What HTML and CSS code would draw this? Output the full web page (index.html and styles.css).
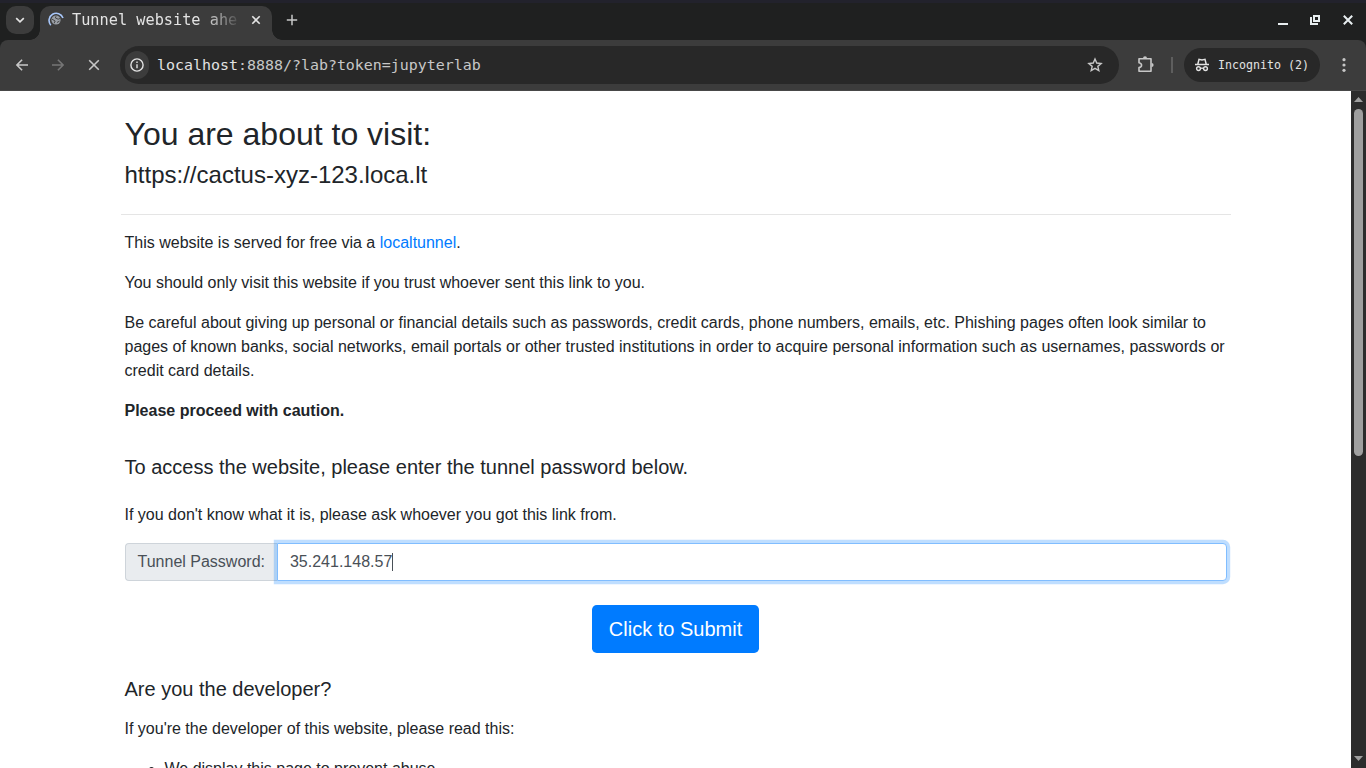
FILE: index.html
```html
<!DOCTYPE html>
<html lang="en">
<head>
<meta charset="utf-8">
<title>Tunnel website ahead!</title>
<link rel="stylesheet" href="styles.css">
</head>
<body>
<div class="window">
  <header class="titlebar">
    <button class="tab-search"><svg width="28" height="28" viewBox="0 0 28 28"><path d="M10.2 12.2 14 15.8l3.8-3.6" fill="none" stroke="#e3e3e3" stroke-width="1.7"/></svg></button>
    <div class="tab">
      <svg class="tab-icon" width="16" height="16" viewBox="0 0 16 16"><circle cx="8" cy="8" r="4.6" fill="#9a9fa6"/><path d="M4 7.2 7.2 9 6 11.4M8 4.2 7.4 6l2.8 1.2L12 6.5M9 10.5l2.5-1.4" fill="none" stroke="#3c3c3c" stroke-width=".9"/><path d="M2.8 13.2A7.2 7.2 0 1 1 15 6" fill="none" stroke="#a8c7fa" stroke-width="1.6"/></svg>
      <span class="tab-title">Tunnel website ahe</span>
      <svg class="tab-close" width="10" height="10" viewBox="0 0 10 10"><path d="m1.3 1.3 7.4 7.4m0-7.4L1.3 8.7" stroke="#e3e3e3" stroke-width="1.6"/></svg>
    </div>
    <svg class="new-tab" width="12" height="12" viewBox="0 0 12 12"><path d="M6 .8v10.4M.8 6h10.4" stroke="#c7c7c7" stroke-width="1.5"/></svg>
    <div class="controls">
      <svg width="10" height="12" viewBox="0 0 10 12"><path d="M0 10h10" stroke="#e8eef0" stroke-width="2"/></svg>
      <svg width="10" height="12" viewBox="0 0 10 12"><path d="M4 2h5v5H4zM1 3v7h7" fill="none" stroke="#e8eef0" stroke-width="2"/></svg>
      <svg width="10" height="12" viewBox="0 0 10 12"><path d="m.8 1.8 8.4 8.4m0-8.4L.8 10.2" stroke="#e8eef0" stroke-width="2"/></svg>
    </div>
  </header>
  <nav class="toolbar">
    <svg class="nav-icon" width="16" height="16" viewBox="0 0 16 16"><path d="M14 8H3M8.1 2.8 2.9 8l5.2 5.2" fill="none" stroke="#c7c7c7" stroke-width="1.6"/></svg>
    <svg class="nav-icon" width="16" height="16" viewBox="0 0 16 16"><path d="M2 8h11M7.9 2.8 13.1 8l-5.2 5.2" fill="none" stroke="#757575" stroke-width="1.6"/></svg>
    <svg class="nav-icon" width="16" height="16" viewBox="0 0 16 16"><path d="m3.2 3.2 9.6 9.6m0-9.6-9.6 9.6" stroke="#c7c7c7" stroke-width="1.6"/></svg>
    <div class="omnibox">
      <span class="site-info"><svg width="14" height="14" viewBox="0 0 14 14"><circle cx="7" cy="7" r="6.1" fill="none" stroke="#e3e3e3" stroke-width="1.4"/><path d="M7 6.2v4.1M7 3.6v1.5" stroke="#e3e3e3" stroke-width="1.4"/></svg></span>
      <span class="url"><b>localhost</b>:8888/?lab?token=jupyterlab</span>
      <svg class="star" width="16" height="16" viewBox="0 0 16 16"><path d="m8 2 1.75 4.05 4.4.4-3.32 2.92.98 4.3L8 11.4l-3.8 2.27.98-4.3L1.85 6.45l4.4-.4z" fill="none" stroke="#c7c7c7" stroke-width="1.4"/></svg>
    </div>
    <svg class="puzzle" width="18" height="18" viewBox="0 0 18 18"><path d="M2 2.8h12v12.4H2v-3.6c3.4-.7 3.4-4.2 0-4.9z" fill="none" stroke="#c7c7c7" stroke-width="1.6" stroke-linejoin="round"/><path d="M6 2.2a2 2 0 0 1 4 0zM14.6 7a2 2 0 0 1 0 4z" fill="#c7c7c7"/></svg>
    <span class="separator"></span>
    <div class="incognito">
      <svg width="16" height="16" viewBox="0 0 16 16"><path d="M1 7.6h14M3.8 7.2 5 2.3l3 .6 3-.6 1.2 4.9" fill="none" stroke="#e3e3e3" stroke-width="1.5"/><circle cx="4.5" cy="11.6" r="1.9" fill="none" stroke="#e3e3e3" stroke-width="1.4"/><circle cx="11.5" cy="11.6" r="1.9" fill="none" stroke="#e3e3e3" stroke-width="1.4"/><path d="M6.5 11.4q1.5-.7 3 0" fill="none" stroke="#e3e3e3" stroke-width="1.3"/></svg>
      <span>Incognito (2)</span>
    </div>
    <svg class="menu" width="4" height="16" viewBox="0 0 4 16"><g fill="#c7c7c7"><circle cx="2" cy="2.7" r="1.6"/><circle cx="2" cy="8" r="1.6"/><circle cx="2" cy="13.3" r="1.6"/></g></svg>
  </nav>
  <div class="viewport">
    <main class="page">
      <div class="container">
        <div class="inset">
          <h2>You are about to visit:</h2>
          <h4>https://cactus-xyz-123.loca.lt</h4>
        </div>
        <hr>
        <div class="inset">
          <p>This website is served for free via a <a href="#">localtunnel</a>.</p>
          <p>You should only visit this website if you trust whoever sent this link to you.</p>
          <p>Be careful about giving up personal or financial details such as passwords, credit cards, phone numbers, emails, etc. Phishing pages often look similar to pages of known banks, social networks, email portals or other trusted institutions in order to acquire personal information such as usernames, passwords or credit card details.</p>
          <p><strong>Please proceed with caution.</strong></p>
          <h5 class="access">To access the website, please enter the tunnel password below.</h5>
          <p>If you don't know what it is, please ask whoever you got this link from.</p>
          <div class="input-group">
            <span class="addon">Tunnel Password:</span>
            <div class="field"><span>35.241.148.57</span><i class="caret"></i></div>
          </div>
          <button class="submit">Click to Submit</button>
          <h5 class="developer">Are you the developer?</h5>
          <p>If you're the developer of this website, please read this:</p>
          <ul><li>We display this page to prevent abuse.</li></ul>
        </div>
      </div>
    </main>
    <aside class="scrollbar">
      <svg width="9" height="5" viewBox="0 0 9 5"><path d="M4.5 0 9 5H0z" fill="#9f9f9f"/></svg>
      <span class="thumb"></span>
      <svg width="9" height="5" viewBox="0 0 9 5"><path d="M0 0h9L4.5 5z" fill="#9f9f9f"/></svg>
    </aside>
  </div>
</div>
</body>
</html>
```
FILE: styles.css
```css
* { box-sizing: border-box; }
body { margin: 0; overflow: hidden; font: 16px/1.5 "Liberation Sans", Arial, sans-serif; color: #212529; }
button { font: inherit; border: 0; padding: 0; }
svg { display: block; flex: none; }
.window { height: 768px; display: flex; flex-direction: column; background: #1f2020; }

.titlebar { height: 40px; flex: none; display: flex; align-items: center; padding: 0 13px 0 6px; background: linear-gradient(#22222c 3px, #1f2020 3px); }
.tab-search { width: 28px; height: 28px; border-radius: 10px; background: #3c3c3c; }
.tab { position: relative; align-self: flex-end; width: 232px; height: 34px; margin-left: 6px; padding: 0 11px 6px 8px; display: flex; align-items: center; border-radius: 10px 10px 0 0; background: #3c3c3c; }
.tab::before, .tab::after { content: ""; position: absolute; bottom: 0; width: 10px; height: 10px; }
.tab::before { right: 100%; background: radial-gradient(circle at 0 0, transparent 9.5px, #3c3c3c 10px); }
.tab::after { left: 100%; background: radial-gradient(circle at 100% 0, transparent 9.5px, #3c3c3c 10px); }
.tab-title { width: 167px; margin-left: 8px; white-space: nowrap; font: 15.25px/20px "DejaVu Sans Mono", monospace; color: #e3e3e3; -webkit-mask-image: linear-gradient(90deg, #000 132px, transparent 170px); mask-image: linear-gradient(90deg, #000 132px, transparent 170px); }
.tab-close { margin-left: auto; }
.new-tab { margin-left: 14px; }
.controls { margin: 0 1px 0 auto; display: flex; gap: 22px; }
.controls svg:last-child { margin: 0 -1px 0 1px; }

.toolbar { height: 51px; flex: none; display: flex; align-items: center; padding: 0 20px 1px 14px; border-radius: 8px 8px 0 0; background: #3c3c3c; border-bottom: 1px solid #474747; }
.nav-icon { margin-right: 20px; }
.nav-icon + .nav-icon + .nav-icon { margin-right: 18px; }
.omnibox { width: 999px; height: 38px; display: flex; align-items: center; padding: 0 16px 0 5px; border-radius: 19px; background: #282828; }
.site-info { width: 24px; height: 28px; display: grid; place-items: center; border-radius: 12px; background: #3c3c3c; }
.url { margin-left: 8px; font: 14.95px/20px "DejaVu Sans Mono", monospace; color: #c7c7c7; }
.url b { font-weight: 400; color: #e3e3e3; }
.star { margin-left: auto; }
.puzzle { margin-left: 18px; }
.separator { width: 2px; height: 16px; margin-left: 16px; background: #5e5e5e; }
.incognito { width: 136px; height: 34px; margin-left: 11px; padding-left: 10px; display: flex; align-items: center; gap: 8px; border-radius: 17px; background: #282828; color: #e3e3e3; font: 11.63px/18px "DejaVu Sans Mono", monospace; white-space: nowrap; }
.menu { margin-left: auto; }

.viewport { flex: 1; min-height: 0; display: flex; }
.page { flex: 1; overflow: hidden; background: #fff; padding-top: 24px; }
.container { width: 1110px; margin: 0 auto; }
.inset { padding: 0 4px; }
h2, h4, h5 { margin: 0 0 8px; font-weight: 400; line-height: 1.2; }
h2 { font-size: 32px; }
h4 { font-size: 24px; }
h5 { font-size: 20px; }
hr { margin: 24px 0 16px; border: 0; border-top: 1px solid rgba(0,0,0,.1); }
p { margin: 0 0 16px; }
a { color: #007bff; text-decoration: none; }
.access { margin: 32px 0 24px; }
.input-group { display: flex; height: 38px; }
.addon { padding: 6px 12px; border: 1px solid #ced4da; border-right: 0; border-radius: 4px 0 0 4px; background: #e9ecef; color: #495057; line-height: 24px; }
.field { flex: 1; display: flex; align-items: center; padding: 0 12px; border: 1px solid #80bdff; border-radius: 0 4px 4px 0; background: #fff; color: #495057; box-shadow: 0 0 0 3.2px rgba(0,123,255,.25); }
.caret { width: 1px; height: 18px; background: #495057; }
.submit { display: block; width: 167px; height: 48px; margin: 24px auto; border-radius: 4.8px; background: #007bff; color: #fff; font-size: 20px; }
.developer { margin-bottom: 16px; }
ul { margin: 0; padding-left: 40px; }

.scrollbar { width: 15px; flex: none; display: flex; flex-direction: column; align-items: center; padding: 6px 0 7px; background: #2c2c2c; }
.thumb { width: 9px; height: 347px; margin: 7px 0 auto; border-radius: 5px; background: #9f9f9f; }
```
